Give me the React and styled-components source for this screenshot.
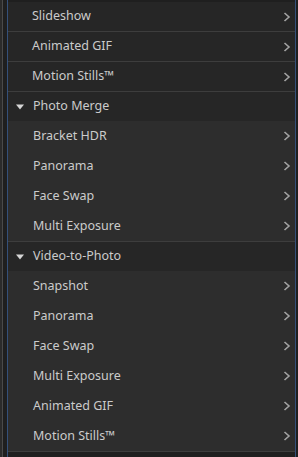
import React from 'react';
import styled, { createGlobalStyle } from 'styled-components';

const GlobalStyle = createGlobalStyle`
  html, body { margin: 0; padding: 0; background: #1f1f1f; }
  body { font-family: "Noto Sans", "Liberation Sans", sans-serif; }
`;

const Shell = styled.div`
  display: flex;
  height: 457px;
  overflow: hidden;
  background: #1f1f1f;
`;

const EdgeStrip = styled.div`
  width: 2px;
  background: #2b2b2b;
  border-right: 1px solid #4a4a4a;
`;

const Panel = styled.div`
  box-sizing: border-box;
  width: 289px;
  margin-left: 4px;
  border-left: 1px solid #34507a;
  border-right: 1px solid #34507a;
  display: flex;
  flex-direction: column;
  padding-top: 2px;
  background: #1f1f1f;
`;

const Row = styled.div`
  box-sizing: border-box;
  display: flex;
  align-items: center;
  height: ${p => (p.$sub ? 30 : 29) + (p.$sep ? 1 : 0)}px;
  padding: 0 4px 2px ${p => (p.$sub ? 25 : 24)}px;
  background: ${p => (p.$sub ? '#2d2d2d' : '#262626')};
  color: #cbcbcb;
  font-size: 12.5px;
  border-bottom: ${p => (p.$sep ? '1px solid #3d3d3d' : 'none')};
`;

const Label = styled.span`
  flex: 1;
`;

const Header = styled.div`
  box-sizing: border-box;
  display: flex;
  align-items: center;
  height: 29px;
  padding: 0 0 2px 8px;
  background: #262626;
  color: #cbcbcb;
  font-size: 12.5px;
  gap: 9px;
`;

const Chevron = () => (
  <svg width="8" height="10" viewBox="0 0 8 10" style={{ marginTop: 2 }}>
    <path d="M1.5 1 L6 5 L1.5 9" fill="none" stroke="#a3a3a3" strokeWidth="1.6" />
  </svg>
);

const Triangle = () => (
  <svg width="8" height="6" viewBox="0 0 8 6" style={{ marginTop: 2 }}>
    <path d="M0 0.5 H8 L4 5.5 Z" fill="#d6d6d6" />
  </svg>
);

const Item = ({ label, sub, sep }) => (
  <Row $sub={sub} $sep={sep}>
    <Label>{label}</Label>
    <Chevron />
  </Row>
);

const groups = [
  { title: 'Photo Merge', items: ['Bracket HDR', 'Panorama', 'Face Swap', 'Multi Exposure'] },
  { title: 'Video-to-Photo', items: ['Snapshot', 'Panorama', 'Face Swap', 'Multi Exposure', 'Animated GIF', 'Motion Stills™'] },
];

export default function App() {
  return (
    <>
      <GlobalStyle />
      <Shell>
        <EdgeStrip />
        <Panel>
          {['Slideshow', 'Animated GIF', 'Motion Stills™'].map(t => (
            <Item key={t} label={t} sep />
          ))}
          {groups.map(g => (
            <React.Fragment key={g.title}>
              <Header>
                <Triangle />
                <span>{g.title}</span>
              </Header>
              {g.items.map((t, i) => (
                <Item key={t} label={t} sub sep={i === g.items.length - 1} />
              ))}
            </React.Fragment>
          ))}
        </Panel>
      </Shell>
    </>
  );
}
